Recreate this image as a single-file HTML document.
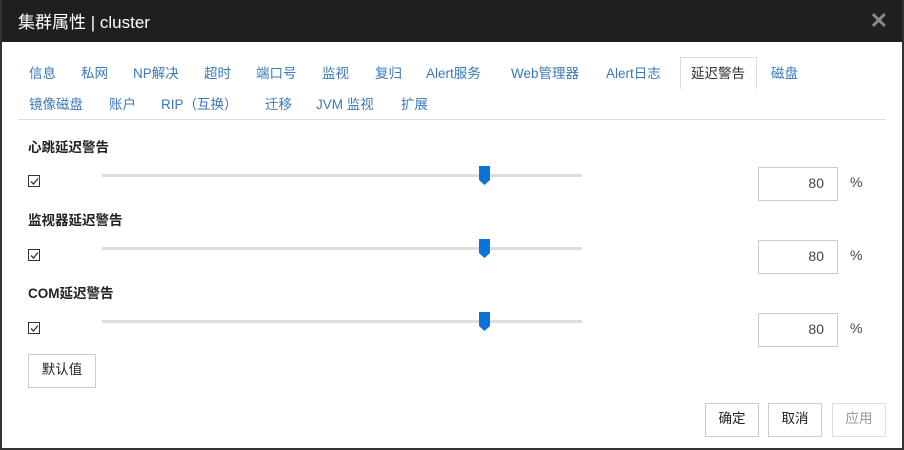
<!DOCTYPE html><html><head><meta charset="utf-8"><style>
*{margin:0;padding:0;box-sizing:border-box}
body{width:904px;height:450px;background:#fff;font-family:"Liberation Sans","Noto Sans CJK SC",sans-serif;position:relative;overflow:hidden}
.frame{position:absolute;left:0;top:0;width:904px;height:450px;border:2px solid #333;border-top:none}
.hdr{position:absolute;left:0;top:0;width:904px;height:42px;background:#1f1f1f;color:#fff;font-size:17px;padding:8px 0 0 18px}
.x{position:absolute;right:16px;top:8px;color:#888;font-size:22px;font-weight:bold}
.t{position:absolute;font-size:13.5px;color:#3a78b8;white-space:nowrap}
.act{position:absolute;left:680px;top:57px;width:77px;height:32px;border:1px solid #ddd;border-bottom:none;background:#fff}
.sep{position:absolute;left:18px;top:119px;width:868px;height:1px;background:#ddd}
.h{position:absolute;left:28px;font-size:13.5px;font-weight:bold;color:#222}
.cb{position:absolute;left:28px;width:12px;height:12px;border:1px solid #333}
.cb svg{position:absolute;left:1px;top:1px}
.tr{position:absolute;left:102px;width:480px;height:3px;background:#ddd}
.th{position:absolute;left:479px;width:11px}
.in{position:absolute;left:758px;width:80px;height:34px;border:1px solid #ccc;font-size:14px;color:#444;text-align:right;padding-right:13px;line-height:31px}
.pc{position:absolute;left:850px;font-size:14px;color:#444}
.b{position:absolute;height:34px;border:1px solid #ccc;font-size:13.5px;color:#222;text-align:center;line-height:30px;background:#fff}
</style></head><body>
<div class="hdr">集群属性 | cluster<span class="x">✕</span></div>
<div class="frame"></div>
<div class="act"></div>
<div class="t" style="left:29px;top:62px">信息</div>
<div class="t" style="left:81px;top:62px">私网</div>
<div class="t" style="left:133px;top:62px">NP解决</div>
<div class="t" style="left:204px;top:62px">超时</div>
<div class="t" style="left:256px;top:62px">端口号</div>
<div class="t" style="left:322px;top:62px">监视</div>
<div class="t" style="left:375px;top:62px">复归</div>
<div class="t" style="left:426px;top:62px">Alert服务</div>
<div class="t" style="left:511px;top:62px">Web管理器</div>
<div class="t" style="left:606px;top:62px">Alert日志</div>
<div class="t" style="left:691px;top:62px;color:#333">延迟警告</div>
<div class="t" style="left:771px;top:62px">磁盘</div>
<div class="t" style="left:29px;top:93px">镜像磁盘</div>
<div class="t" style="left:109px;top:93px">账户</div>
<div class="t" style="left:161px;top:93px">RIP（互换）</div>
<div class="t" style="left:265px;top:93px">迁移</div>
<div class="t" style="left:316px;top:93px">JVM 监视</div>
<div class="t" style="left:401px;top:93px">扩展</div>
<div class="sep"></div>

<div class="h" style="top:136px">心跳延迟警告</div>
<div class="cb" style="top:175px"><svg width="9" height="9"><path d="M1 4.5L3.5 7L8 1.5" stroke="#333" stroke-width="1.3" fill="none"/></svg></div>
<div class="tr" style="top:174px"></div>
<svg class="th" style="top:166px" width="11" height="19"><path d="M0 0H11V14L5.5 19L0 14Z" fill="#0a74d8"/></svg>
<div class="in" style="top:167px">80</div><div class="pc" style="top:174px">%</div>

<div class="h" style="top:209px">监视器延迟警告</div>
<div class="cb" style="top:249px"><svg width="9" height="9"><path d="M1 4.5L3.5 7L8 1.5" stroke="#333" stroke-width="1.3" fill="none"/></svg></div>
<div class="tr" style="top:247px"></div>
<svg class="th" style="top:239px" width="11" height="19"><path d="M0 0H11V14L5.5 19L0 14Z" fill="#0a74d8"/></svg>
<div class="in" style="top:240px">80</div><div class="pc" style="top:247px">%</div>

<div class="h" style="top:282px">COM延迟警告</div>
<div class="cb" style="top:322px"><svg width="9" height="9"><path d="M1 4.5L3.5 7L8 1.5" stroke="#333" stroke-width="1.3" fill="none"/></svg></div>
<div class="tr" style="top:320px"></div>
<svg class="th" style="top:312px" width="11" height="19"><path d="M0 0H11V14L5.5 19L0 14Z" fill="#0a74d8"/></svg>
<div class="in" style="top:313px">80</div><div class="pc" style="top:320px">%</div>

<div class="b" style="left:28px;top:354px;width:68px">默认值</div>
<div class="b" style="left:705px;top:403px;width:54px">确定</div>
<div class="b" style="left:768px;top:403px;width:54px">取消</div>
<div class="b" style="left:832px;top:403px;width:54px;color:#999;border-color:#ddd">应用</div>
</body></html>
